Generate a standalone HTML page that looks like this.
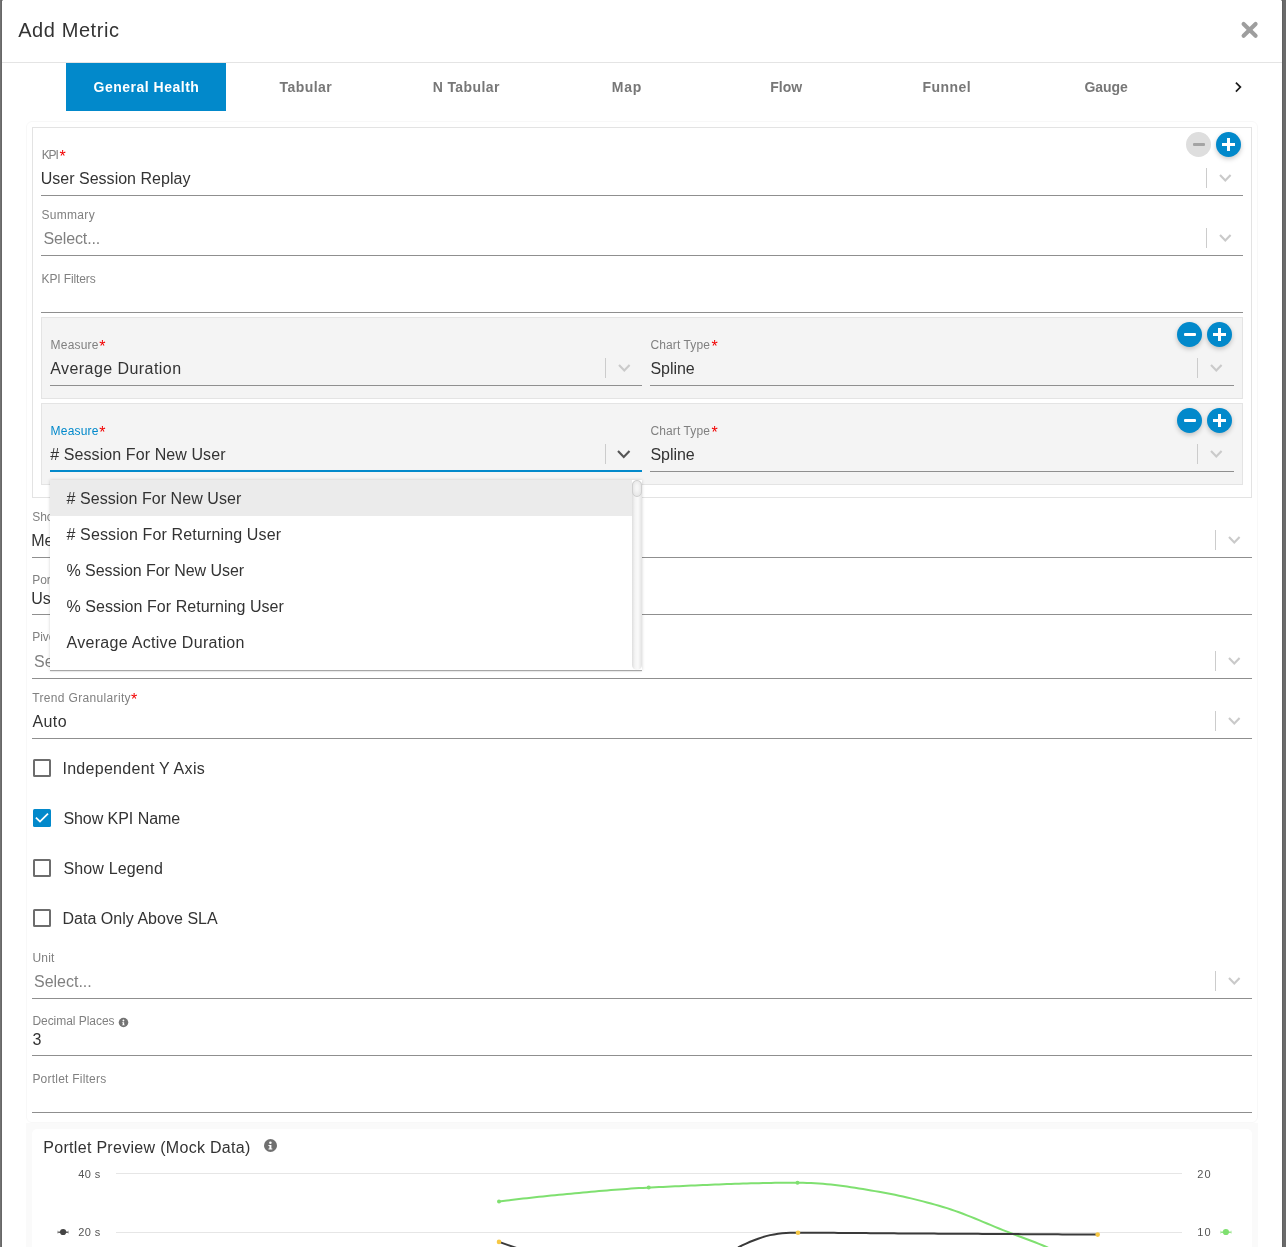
<!DOCTYPE html>
<html><head><meta charset="utf-8"><style>
html,body{margin:0;padding:0;width:1286px;height:1247px;overflow:hidden;background:#fff;font-family:"Liberation Sans", sans-serif;}
</style></head><body>
<div style="position:relative;width:1286px;height:1247px;overflow:hidden;will-change:transform">
<div style="position:absolute;left:0px;top:0px;width:1px;height:1247px;background:#727272"></div>
<div style="position:absolute;left:1px;top:0px;width:1px;height:1247px;background:#676767"></div>
<div style="position:absolute;left:1282px;top:0px;width:1px;height:1247px;background:#606060"></div>
<div style="position:absolute;left:1283px;top:0px;width:3px;height:1247px;background:#6a6a6a"></div>
<div style="position:absolute;left:2px;top:0px;width:1px;height:1px;background:#aaaaaa"></div>
<div style="position:absolute;left:1281px;top:0px;width:1px;height:1px;background:#aaaaaa"></div>
<div style="position:absolute;left:18.20px;top:20.07px;font-size:20px;line-height:20px;font-weight:400;color:#333;letter-spacing:0.579px;white-space:nowrap;">Add Metric</div>
<svg style="position:absolute;left:1239px;top:19px" width="21" height="21" viewBox="0 0 21 21"><path d="M4.6 5.0 L16.6 16.8 M16.6 5.0 L4.6 16.8" stroke="#9e9e9e" stroke-width="4.1" stroke-linecap="round"/></svg>
<div style="position:absolute;left:2px;top:62px;width:1280px;height:1px;background:#e4e4e4"></div>
<div style="position:absolute;left:66px;top:63px;width:160px;height:48px;background:#0289cb"></div>
<div style="position:absolute;left:93.60px;top:80.15px;font-size:14px;line-height:14px;font-weight:700;color:#ffffff;letter-spacing:0.495px;white-space:nowrap;">General Health</div>
<div style="position:absolute;left:279.60px;top:80.15px;font-size:14px;line-height:14px;font-weight:700;color:#777777;letter-spacing:0.420px;white-space:nowrap;">Tabular</div>
<div style="position:absolute;left:432.70px;top:80.15px;font-size:14px;line-height:14px;font-weight:700;color:#777777;letter-spacing:0.390px;white-space:nowrap;">N Tabular</div>
<div style="position:absolute;left:611.70px;top:80.15px;font-size:14px;line-height:14px;font-weight:700;color:#777777;letter-spacing:0.826px;white-space:nowrap;">Map</div>
<div style="position:absolute;left:770.30px;top:80.15px;font-size:14px;line-height:14px;font-weight:700;color:#777777;letter-spacing:0.002px;white-space:nowrap;">Flow</div>
<div style="position:absolute;left:922.50px;top:80.15px;font-size:14px;line-height:14px;font-weight:700;color:#777777;letter-spacing:0.461px;white-space:nowrap;">Funnel</div>
<div style="position:absolute;left:1084.50px;top:80.15px;font-size:14px;line-height:14px;font-weight:700;color:#777777;letter-spacing:-0.095px;white-space:nowrap;">Gauge</div>
<svg style="position:absolute;left:1232px;top:80px" width="12" height="14" viewBox="0 0 12 14"><path d="M3.9 2.6 L8.4 7.1 L3.9 11.6" stroke="#1c1c1c" stroke-width="1.7" fill="none"/></svg>
<div style="position:absolute;left:26px;top:121px;width:1232px;height:1002px;border:1px solid #f8f8f8;border-radius:6px;box-sizing:border-box"></div>
<div style="position:absolute;left:32px;top:127px;width:1220px;height:371px;border:1px solid #e3e3e3;box-sizing:border-box;background:#fff"></div>
<div style="position:absolute;left:1186.0px;top:132.0px;width:25px;height:25px;border-radius:50%;background:#dedede;"></div>
<div style="position:absolute;left:1192.5px;top:143.0px;width:12px;height:3px;background:#a4a4a4;border-radius:1px"></div>
<div style="position:absolute;left:1216.0px;top:132.0px;width:25px;height:25px;border-radius:50%;background:#0289cb;box-shadow:0 2px 5px rgba(0,0,0,0.22);"></div>
<div style="position:absolute;left:1222.0px;top:143.0px;width:13px;height:3px;background:#fff"></div>
<div style="position:absolute;left:1227.0px;top:138.0px;width:3px;height:13px;background:#fff"></div>
<div style="position:absolute;left:41.70px;top:148.84px;font-size:12px;line-height:12px;font-weight:400;color:#808080;letter-spacing:-1.154px;white-space:nowrap;">KPI</div>
<div style="position:absolute;left:59.60px;top:149.16px;font-size:16px;line-height:16px;font-weight:400;color:#f20000;letter-spacing:0.000px;white-space:nowrap;">*</div>
<div style="position:absolute;left:40.70px;top:171.06px;font-size:16px;line-height:16px;font-weight:400;color:#333333;letter-spacing:0.017px;white-space:nowrap;">User Session Replay</div>
<div style="position:absolute;left:41px;top:195px;width:1202px;height:1px;background:#8f8f8f"></div>
<div style="position:absolute;left:1206px;top:168px;width:1px;height:20px;background:#cccccc"></div>
<svg style="position:absolute;left:1217.7px;top:173.2px" width="14.6" height="9.6" viewBox="0 0 14.6 9.6"><path d="M2 2 L7.3 7.6 L12.6 2" stroke="#cacaca" stroke-width="2.1" fill="none"/></svg>
<div style="position:absolute;left:41.40px;top:209.04px;font-size:12px;line-height:12px;font-weight:400;color:#808080;letter-spacing:0.327px;white-space:nowrap;">Summary</div>
<div style="position:absolute;left:43.50px;top:231.36px;font-size:16px;line-height:16px;font-weight:400;color:#808080;letter-spacing:-0.132px;white-space:nowrap;">Select...</div>
<div style="position:absolute;left:41px;top:255px;width:1202px;height:1px;background:#8f8f8f"></div>
<div style="position:absolute;left:1206px;top:228px;width:1px;height:20px;background:#cccccc"></div>
<svg style="position:absolute;left:1217.7px;top:233.2px" width="14.6" height="9.6" viewBox="0 0 14.6 9.6"><path d="M2 2 L7.3 7.6 L12.6 2" stroke="#cacaca" stroke-width="2.1" fill="none"/></svg>
<div style="position:absolute;left:41.50px;top:272.64px;font-size:12px;line-height:12px;font-weight:400;color:#808080;letter-spacing:-0.114px;white-space:nowrap;">KPI Filters</div>
<div style="position:absolute;left:41px;top:312px;width:1202px;height:1px;background:#8f8f8f"></div>
<div style="position:absolute;left:41px;top:317px;width:1202px;height:82px;background:#f4f4f4;border:1px solid #e4e4e4;box-sizing:border-box"></div>
<div style="position:absolute;left:50.60px;top:338.84px;font-size:12px;line-height:12px;font-weight:400;color:#808080;letter-spacing:0.198px;white-space:nowrap;">Measure</div>
<div style="position:absolute;left:99.30px;top:338.96px;font-size:16px;line-height:16px;font-weight:400;color:#f20000;letter-spacing:0.000px;white-space:nowrap;">*</div>
<div style="position:absolute;left:50.20px;top:361.26px;font-size:16px;line-height:16px;font-weight:400;color:#333333;letter-spacing:0.445px;white-space:nowrap;">Average Duration</div>
<div style="position:absolute;left:50px;top:385px;width:592px;height:1px;background:#8f8f8f"></div>
<div style="position:absolute;left:605px;top:358px;width:1px;height:20px;background:#cccccc"></div>
<svg style="position:absolute;left:616.7px;top:363.2px" width="14.6" height="9.6" viewBox="0 0 14.6 9.6"><path d="M2 2 L7.3 7.6 L12.6 2" stroke="#cacaca" stroke-width="2.1" fill="none"/></svg>
<div style="position:absolute;left:650.50px;top:338.84px;font-size:12px;line-height:12px;font-weight:400;color:#808080;letter-spacing:0.098px;white-space:nowrap;">Chart Type</div>
<div style="position:absolute;left:711.40px;top:338.96px;font-size:16px;line-height:16px;font-weight:400;color:#f20000;letter-spacing:0.000px;white-space:nowrap;">*</div>
<div style="position:absolute;left:650.50px;top:361.26px;font-size:16px;line-height:16px;font-weight:400;color:#333333;letter-spacing:-0.056px;white-space:nowrap;">Spline</div>
<div style="position:absolute;left:650px;top:385px;width:584px;height:1px;background:#8f8f8f"></div>
<div style="position:absolute;left:1197px;top:358px;width:1px;height:20px;background:#cccccc"></div>
<svg style="position:absolute;left:1208.7px;top:363.2px" width="14.6" height="9.6" viewBox="0 0 14.6 9.6"><path d="M2 2 L7.3 7.6 L12.6 2" stroke="#cacaca" stroke-width="2.1" fill="none"/></svg>
<div style="position:absolute;left:1177.0px;top:322.0px;width:25px;height:25px;border-radius:50%;background:#0289cb;box-shadow:0 2px 5px rgba(0,0,0,0.22);"></div>
<div style="position:absolute;left:1183.5px;top:333.0px;width:12px;height:3px;background:#fff;border-radius:1px"></div>
<div style="position:absolute;left:1207.0px;top:322.0px;width:25px;height:25px;border-radius:50%;background:#0289cb;box-shadow:0 2px 5px rgba(0,0,0,0.22);"></div>
<div style="position:absolute;left:1213.0px;top:333.0px;width:13px;height:3px;background:#fff"></div>
<div style="position:absolute;left:1218.0px;top:328.0px;width:3px;height:13px;background:#fff"></div>
<div style="position:absolute;left:41px;top:403px;width:1202px;height:82px;background:#f4f4f4;border:1px solid #e4e4e4;box-sizing:border-box"></div>
<div style="position:absolute;left:50.60px;top:424.84px;font-size:12px;line-height:12px;font-weight:400;color:#0289cb;letter-spacing:0.198px;white-space:nowrap;">Measure</div>
<div style="position:absolute;left:99.30px;top:424.96px;font-size:16px;line-height:16px;font-weight:400;color:#f20000;letter-spacing:0.000px;white-space:nowrap;">*</div>
<div style="position:absolute;left:50.20px;top:447.26px;font-size:16px;line-height:16px;font-weight:400;color:#333333;letter-spacing:0.092px;white-space:nowrap;"># Session For New User</div>
<div style="position:absolute;left:50px;top:470px;width:592px;height:2px;background:#0289cb"></div>
<div style="position:absolute;left:605px;top:444px;width:1px;height:20px;background:#cccccc"></div>
<svg style="position:absolute;left:616.25px;top:448.975px" width="15.5" height="10.05" viewBox="0 0 15.5 10.05"><path d="M2 2 L7.75 8.05 L13.5 2" stroke="#555555" stroke-width="2.1" fill="none"/></svg>
<div style="position:absolute;left:650.50px;top:424.84px;font-size:12px;line-height:12px;font-weight:400;color:#808080;letter-spacing:0.098px;white-space:nowrap;">Chart Type</div>
<div style="position:absolute;left:711.40px;top:424.96px;font-size:16px;line-height:16px;font-weight:400;color:#f20000;letter-spacing:0.000px;white-space:nowrap;">*</div>
<div style="position:absolute;left:650.50px;top:447.26px;font-size:16px;line-height:16px;font-weight:400;color:#333333;letter-spacing:-0.056px;white-space:nowrap;">Spline</div>
<div style="position:absolute;left:650px;top:471px;width:584px;height:1px;background:#8f8f8f"></div>
<div style="position:absolute;left:1197px;top:444px;width:1px;height:20px;background:#cccccc"></div>
<svg style="position:absolute;left:1208.7px;top:449.2px" width="14.6" height="9.6" viewBox="0 0 14.6 9.6"><path d="M2 2 L7.3 7.6 L12.6 2" stroke="#cacaca" stroke-width="2.1" fill="none"/></svg>
<div style="position:absolute;left:1177.0px;top:408.0px;width:25px;height:25px;border-radius:50%;background:#0289cb;box-shadow:0 2px 5px rgba(0,0,0,0.22);"></div>
<div style="position:absolute;left:1183.5px;top:419.0px;width:12px;height:3px;background:#fff;border-radius:1px"></div>
<div style="position:absolute;left:1207.0px;top:408.0px;width:25px;height:25px;border-radius:50%;background:#0289cb;box-shadow:0 2px 5px rgba(0,0,0,0.22);"></div>
<div style="position:absolute;left:1213.0px;top:419.0px;width:13px;height:3px;background:#fff"></div>
<div style="position:absolute;left:1218.0px;top:414.0px;width:3px;height:13px;background:#fff"></div>
<div style="position:absolute;left:32.20px;top:510.84px;font-size:12px;line-height:12px;font-weight:400;color:#808080;letter-spacing:0.000px;white-space:nowrap;">Show Data By</div>
<div style="position:absolute;left:31.20px;top:533.06px;font-size:16px;line-height:16px;font-weight:400;color:#333333;letter-spacing:0.000px;white-space:nowrap;">Measures</div>
<div style="position:absolute;left:32px;top:557px;width:1220px;height:1px;background:#8f8f8f"></div>
<div style="position:absolute;left:1215px;top:530px;width:1px;height:20px;background:#cccccc"></div>
<svg style="position:absolute;left:1226.7px;top:535.2px" width="14.6" height="9.6" viewBox="0 0 14.6 9.6"><path d="M2 2 L7.3 7.6 L12.6 2" stroke="#cacaca" stroke-width="2.1" fill="none"/></svg>
<div style="position:absolute;left:32.20px;top:574.44px;font-size:12px;line-height:12px;font-weight:400;color:#808080;letter-spacing:0.000px;white-space:nowrap;">Portlet Name</div>
<div style="position:absolute;left:31.20px;top:590.76px;font-size:16px;line-height:16px;font-weight:400;color:#333333;letter-spacing:0.000px;white-space:nowrap;">User Session Replay</div>
<div style="position:absolute;left:32px;top:614px;width:1220px;height:1px;background:#8f8f8f"></div>
<div style="position:absolute;left:32.20px;top:631.44px;font-size:12px;line-height:12px;font-weight:400;color:#808080;letter-spacing:0.000px;white-space:nowrap;">Pivot By</div>
<div style="position:absolute;left:34.00px;top:653.66px;font-size:16px;line-height:16px;font-weight:400;color:#808080;letter-spacing:0.000px;white-space:nowrap;">Select...</div>
<div style="position:absolute;left:32px;top:678px;width:1220px;height:1px;background:#8f8f8f"></div>
<div style="position:absolute;left:1215px;top:651px;width:1px;height:20px;background:#cccccc"></div>
<svg style="position:absolute;left:1226.7px;top:656.2px" width="14.6" height="9.6" viewBox="0 0 14.6 9.6"><path d="M2 2 L7.3 7.6 L12.6 2" stroke="#cacaca" stroke-width="2.1" fill="none"/></svg>
<div style="position:absolute;left:32.20px;top:691.84px;font-size:12px;line-height:12px;font-weight:400;color:#808080;letter-spacing:0.342px;white-space:nowrap;">Trend Granularity</div>
<div style="position:absolute;left:131.10px;top:691.96px;font-size:16px;line-height:16px;font-weight:400;color:#f20000;letter-spacing:0.000px;white-space:nowrap;">*</div>
<div style="position:absolute;left:32.40px;top:714.16px;font-size:16px;line-height:16px;font-weight:400;color:#333333;letter-spacing:0.428px;white-space:nowrap;">Auto</div>
<div style="position:absolute;left:32px;top:738px;width:1220px;height:1px;background:#8f8f8f"></div>
<div style="position:absolute;left:1215px;top:711px;width:1px;height:20px;background:#cccccc"></div>
<svg style="position:absolute;left:1226.7px;top:716.2px" width="14.6" height="9.6" viewBox="0 0 14.6 9.6"><path d="M2 2 L7.3 7.6 L12.6 2" stroke="#cacaca" stroke-width="2.1" fill="none"/></svg>
<div style="position:absolute;left:33px;top:759px;width:18px;height:18px;border:2px solid #6d6d6d;border-radius:1.5px;box-sizing:border-box"></div>
<div style="position:absolute;left:62.40px;top:761.16px;font-size:16px;line-height:16px;font-weight:400;color:#333333;letter-spacing:0.296px;white-space:nowrap;">Independent Y Axis</div>
<div style="position:absolute;left:33px;top:809px;width:18px;height:18px;background:#0289cb;border-radius:1.5px"></div>
<svg style="position:absolute;left:33px;top:809px" width="18" height="18" viewBox="0 0 18 18"><path d="M2.9 8.6 L7 12.6 L15 4.6" stroke="#fff" stroke-width="1.8" fill="none"/></svg>
<div style="position:absolute;left:63.40px;top:811.16px;font-size:16px;line-height:16px;font-weight:400;color:#333333;letter-spacing:-0.049px;white-space:nowrap;">Show KPI Name</div>
<div style="position:absolute;left:33px;top:859px;width:18px;height:18px;border:2px solid #6d6d6d;border-radius:1.5px;box-sizing:border-box"></div>
<div style="position:absolute;left:63.40px;top:861.16px;font-size:16px;line-height:16px;font-weight:400;color:#333333;letter-spacing:0.154px;white-space:nowrap;">Show Legend</div>
<div style="position:absolute;left:33px;top:909px;width:18px;height:18px;border:2px solid #6d6d6d;border-radius:1.5px;box-sizing:border-box"></div>
<div style="position:absolute;left:62.40px;top:911.16px;font-size:16px;line-height:16px;font-weight:400;color:#333333;letter-spacing:0.030px;white-space:nowrap;">Data Only Above SLA</div>
<div style="position:absolute;left:32.40px;top:951.84px;font-size:12px;line-height:12px;font-weight:400;color:#808080;letter-spacing:0.231px;white-space:nowrap;">Unit</div>
<div style="position:absolute;left:34.00px;top:974.06px;font-size:16px;line-height:16px;font-weight:400;color:#808080;letter-spacing:-0.007px;white-space:nowrap;">Select...</div>
<div style="position:absolute;left:32px;top:998px;width:1220px;height:1px;background:#8f8f8f"></div>
<div style="position:absolute;left:1215px;top:971px;width:1px;height:20px;background:#cccccc"></div>
<svg style="position:absolute;left:1226.7px;top:976.2px" width="14.6" height="9.6" viewBox="0 0 14.6 9.6"><path d="M2 2 L7.3 7.6 L12.6 2" stroke="#cacaca" stroke-width="2.1" fill="none"/></svg>
<div style="position:absolute;left:32.40px;top:1015.34px;font-size:12px;line-height:12px;font-weight:400;color:#808080;letter-spacing:-0.038px;white-space:nowrap;">Decimal Places</div>
<svg style="position:absolute;left:117.8px;top:1016.6px" width="11" height="11" viewBox="-1 -1 15 15"><circle cx="6.5" cy="6.5" r="6.5" fill="#737373"/><circle cx="6.4" cy="3.8" r="1.25" fill="#fff"/><path d="M4.4 6 L7.4 6 L7.4 9.4 L8.3 9.4 L8.3 10.4 L4.5 10.4 L4.5 9.4 L5.4 9.4 L5.4 7 L4.4 7 Z" fill="#fff"/></svg>
<div style="position:absolute;left:32.40px;top:1031.86px;font-size:16px;line-height:16px;font-weight:400;color:#333333;letter-spacing:0.000px;white-space:nowrap;">3</div>
<div style="position:absolute;left:32px;top:1055px;width:1220px;height:1px;background:#8f8f8f"></div>
<div style="position:absolute;left:32.40px;top:1072.64px;font-size:12px;line-height:12px;font-weight:400;color:#808080;letter-spacing:0.223px;white-space:nowrap;">Portlet Filters</div>
<div style="position:absolute;left:32px;top:1112px;width:1220px;height:1px;background:#8f8f8f"></div>
<div style="position:absolute;left:26px;top:1122.5px;width:1232px;height:200px;background:#fafafa"></div>
<div style="position:absolute;left:32px;top:1129px;width:1220px;height:200px;background:#fff;border-radius:5px"></div>
<div style="position:absolute;left:43.30px;top:1140.16px;font-size:16px;line-height:16px;font-weight:400;color:#333;letter-spacing:0.302px;white-space:nowrap;">Portlet Preview (Mock Data)</div>
<svg style="position:absolute;left:262.5px;top:1138.2px" width="15" height="15" viewBox="-1 -1 15 15"><circle cx="6.5" cy="6.5" r="6.5" fill="#707070"/><circle cx="6.4" cy="3.8" r="1.25" fill="#fff"/><path d="M4.4 6 L7.4 6 L7.4 9.4 L8.3 9.4 L8.3 10.4 L4.5 10.4 L4.5 9.4 L5.4 9.4 L5.4 7 L4.4 7 Z" fill="#fff"/></svg>
<div style="position:absolute;left:116px;top:1173px;width:1066px;height:1px;background:#e6e6e6"></div>
<div style="position:absolute;left:116px;top:1232px;width:1066px;height:1px;background:#e6e6e6"></div>
<div style="position:absolute;left:78.30px;top:1168.69px;font-size:11px;line-height:11px;font-weight:400;color:#555555;letter-spacing:0.403px;white-space:nowrap;">40 s</div>
<div style="position:absolute;left:78.30px;top:1226.69px;font-size:11px;line-height:11px;font-weight:400;color:#555555;letter-spacing:0.403px;white-space:nowrap;">20 s</div>
<div style="position:absolute;left:1197.30px;top:1168.69px;font-size:11px;line-height:11px;font-weight:400;color:#555555;letter-spacing:1.182px;white-space:nowrap;">20</div>
<div style="position:absolute;left:1197.30px;top:1226.69px;font-size:11px;line-height:11px;font-weight:400;color:#555555;letter-spacing:1.182px;white-space:nowrap;">10</div>
<svg style="position:absolute;left:0;top:0" width="1286" height="1247" viewBox="0 0 1286 1247">
<path d="M499.0 1201.50 L503.0 1201.01 L507.0 1200.52 L511.0 1200.03 L515.0 1199.55 L519.0 1199.08 L523.0 1198.61 L527.0 1198.15 L531.0 1197.70 L535.0 1197.26 L539.0 1196.82 L543.0 1196.40 L547.0 1195.98 L551.0 1195.58 L555.0 1195.18 L559.0 1194.79 L563.0 1194.42 L567.0 1194.04 L571.0 1193.66 L575.0 1193.29 L579.0 1192.91 L583.0 1192.54 L587.0 1192.17 L591.0 1191.81 L595.0 1191.45 L599.0 1191.10 L603.0 1190.76 L607.0 1190.42 L611.0 1190.09 L615.0 1189.78 L619.0 1189.47 L623.0 1189.17 L627.0 1188.89 L631.0 1188.62 L635.0 1188.36 L639.0 1188.12 L643.0 1187.89 L647.0 1187.68 L651.0 1187.49 L655.0 1187.29 L659.0 1187.10 L663.0 1186.91 L667.0 1186.72 L671.0 1186.52 L675.0 1186.33 L679.0 1186.14 L683.0 1185.96 L687.0 1185.77 L691.0 1185.59 L695.0 1185.41 L699.0 1185.23 L703.0 1185.06 L707.0 1184.89 L711.0 1184.72 L715.0 1184.56 L719.0 1184.41 L723.0 1184.25 L727.0 1184.11 L731.0 1183.97 L735.0 1183.83 L739.0 1183.70 L743.0 1183.58 L747.0 1183.46 L751.0 1183.35 L755.0 1183.25 L759.0 1183.16 L763.0 1183.07 L767.0 1182.99 L771.0 1182.92 L775.0 1182.86 L779.0 1182.81 L783.0 1182.77 L787.0 1182.74 L791.0 1182.71 L795.0 1182.70 L799.0 1182.71 L803.0 1182.78 L807.0 1182.92 L811.0 1183.12 L815.0 1183.33 L819.0 1183.56 L823.0 1183.83 L827.0 1184.16 L831.0 1184.54 L835.0 1184.98 L839.0 1185.46 L843.0 1185.98 L847.0 1186.54 L851.0 1187.14 L855.0 1187.76 L859.0 1188.40 L863.0 1189.07 L867.0 1189.75 L871.0 1190.44 L875.0 1191.13 L879.0 1191.83 L883.0 1192.53 L887.0 1193.27 L891.0 1194.04 L895.0 1194.85 L899.0 1195.69 L903.0 1196.56 L907.0 1197.47 L911.0 1198.40 L915.0 1199.37 L919.0 1200.37 L923.0 1201.39 L927.0 1202.45 L931.0 1203.53 L935.0 1204.64 L939.0 1205.77 L943.0 1206.94 L947.0 1208.16 L951.0 1209.47 L955.0 1210.84 L959.0 1212.28 L963.0 1213.78 L967.0 1215.32 L971.0 1216.90 L975.0 1218.51 L979.0 1220.15 L983.0 1221.81 L987.0 1223.48 L991.0 1225.15 L995.0 1226.81 L999.0 1228.46 L1003.0 1230.09 L1007.0 1231.69 L1011.0 1233.25 L1015.0 1234.77 L1019.0 1236.26 L1023.0 1237.73 L1027.0 1239.20 L1031.0 1240.70 L1035.0 1242.23 L1039.0 1243.83 L1043.0 1245.50 L1047.0 1247.27 L1051.0 1249.21 L1055.0 1251.28 L1059.0 1253.45 L1060.0 1254.00" stroke="#7fe070" stroke-width="2" fill="none"/>
<path d="M499 1241.9 L 518 1248.5" stroke="#3a3a3a" stroke-width="2" fill="none"/>
<path d="M738.1 1247.50 L742.1 1245.46 L746.1 1243.55 L750.1 1241.79 L754.1 1240.21 L758.1 1238.74 L762.1 1237.34 L766.1 1236.11 L770.1 1235.14 L774.1 1234.41 L778.1 1233.77 L782.1 1233.30 L786.1 1233.04 L790.1 1232.87 L794.1 1232.74 L798.1 1232.70 L802.1 1232.70 L806.1 1232.71 L810.1 1232.72 L814.1 1232.73 L818.1 1232.75 L822.1 1232.77 L826.1 1232.79 L830.1 1232.82 L834.1 1232.85 L838.1 1232.88 L842.1 1232.91 L846.1 1232.94 L850.1 1232.98 L854.1 1233.01 L858.1 1233.05 L862.1 1233.09 L866.1 1233.12 L870.1 1233.16 L874.1 1233.20 L878.1 1233.23 L882.1 1233.27 L886.1 1233.30 L890.1 1233.33 L894.1 1233.36 L898.1 1233.39 L902.1 1233.41 L906.1 1233.44 L910.1 1233.46 L914.1 1233.49 L918.1 1233.51 L922.1 1233.54 L926.1 1233.56 L930.1 1233.59 L934.1 1233.61 L938.1 1233.63 L942.1 1233.66 L946.1 1233.68 L950.1 1233.70 L954.1 1233.73 L958.1 1233.75 L962.1 1233.78 L966.1 1233.80 L970.1 1233.82 L974.1 1233.85 L978.1 1233.87 L982.1 1233.89 L986.1 1233.92 L990.1 1233.94 L994.1 1233.96 L998.1 1233.99 L1002.1 1234.01 L1006.1 1234.04 L1010.1 1234.06 L1014.1 1234.09 L1018.1 1234.11 L1022.1 1234.13 L1026.1 1234.16 L1030.1 1234.18 L1034.1 1234.21 L1038.1 1234.23 L1042.1 1234.26 L1046.1 1234.28 L1050.1 1234.31 L1054.1 1234.33 L1058.1 1234.36 L1062.1 1234.38 L1066.1 1234.40 L1070.1 1234.43 L1074.1 1234.45 L1078.1 1234.48 L1082.1 1234.50 L1086.1 1234.53 L1090.1 1234.55 L1094.1 1234.58 L1097.7 1234.60" stroke="#3a3a3a" stroke-width="2" fill="none"/>
<circle cx="499" cy="1201.5" r="2" fill="#7fe070"/><circle cx="648.7" cy="1187.6" r="2" fill="#7fe070"/><circle cx="797.5" cy="1182.7" r="2" fill="#7fe070"/>
<circle cx="499" cy="1241.9" r="2.3" fill="#f7c844"/><circle cx="798" cy="1232.7" r="2.3" fill="#f7c844"/><circle cx="1097.7" cy="1234.6" r="2.3" fill="#f7c844"/>
<path d="M57.5 1232.2 L68.7 1232.2" stroke="#444" stroke-width="1.3"/><path d="M57.8 1230.6 L57.8 1233.8 M68.4 1230.6 L68.4 1233.8" stroke="#bbb" stroke-width="0.8"/><circle cx="63.1" cy="1232" r="3.1" fill="#444"/>
<path d="M1220.3 1232.2 L1231.5 1232.2" stroke="#7fe070" stroke-width="1.3"/><path d="M1220.6 1230.6 L1220.6 1233.8 M1231.2 1230.6 L1231.2 1233.8" stroke="#c8efc0" stroke-width="0.8"/><circle cx="1225.9" cy="1232" r="3.1" fill="#7fe070"/>
</svg>
<div style="position:absolute;left:50px;top:480px;width:592px;height:190px;background:#fff;box-shadow:0 0 3px rgba(0,0,0,0.18)"></div>
<div style="position:absolute;left:50px;top:480px;width:582px;height:36px;background:#ebebeb"></div>
<div style="position:absolute;left:66.50px;top:491.26px;font-size:16px;line-height:16px;font-weight:400;color:#333333;letter-spacing:0.068px;white-space:nowrap;"># Session For New User</div>
<div style="position:absolute;left:66.50px;top:527.26px;font-size:16px;line-height:16px;font-weight:400;color:#333333;letter-spacing:0.140px;white-space:nowrap;"># Session For Returning User</div>
<div style="position:absolute;left:66.50px;top:563.26px;font-size:16px;line-height:16px;font-weight:400;color:#333333;letter-spacing:-0.052px;white-space:nowrap;">% Session For New User</div>
<div style="position:absolute;left:66.50px;top:599.16px;font-size:16px;line-height:16px;font-weight:400;color:#333333;letter-spacing:0.046px;white-space:nowrap;">% Session For Returning User</div>
<div style="position:absolute;left:66.50px;top:634.66px;font-size:16px;line-height:16px;font-weight:400;color:#333333;letter-spacing:0.298px;white-space:nowrap;">Average Active Duration</div>
<div style="position:absolute;left:50px;top:670px;width:592px;height:1px;background:#a6a6a6;box-shadow:0 1px 1px rgba(0,0,0,0.08)"></div>
<div style="position:absolute;left:632px;top:480px;width:10px;height:190px;background:linear-gradient(to right,#dedede,#f4f4f4 30%,#fafafa 60%,#e2e2e2);border-radius:5px"></div>
<div style="position:absolute;left:632px;top:480px;width:10px;height:17px;background:radial-gradient(ellipse at 50% 45%,#f6f6f6 20%,#e2e2e2 90%);border:1px solid #cfcfcf;box-sizing:border-box;border-radius:5px"></div>
</div></body></html>
